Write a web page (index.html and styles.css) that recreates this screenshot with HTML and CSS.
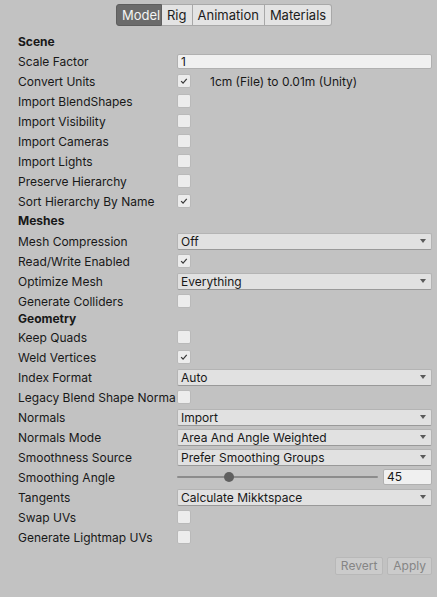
FILE: index.html
```html
<!DOCTYPE html>
<html>
<head>
<meta charset="utf-8">
<link rel="stylesheet" href="styles.css">
</head>
<body>
<div class="inspector">
  <div class="tabs">
    <div class="tab active">Model</div>
    <div class="tab">Rig</div>
    <div class="tab">Animation</div>
    <div class="tab">Materials</div>
  </div>

  <div class="header first">Scene</div>
  <div class="row"><div class="label">Scale Factor</div><div class="ctrl"><div class="field">1</div></div></div>
  <div class="row"><div class="label">Convert Units</div><div class="ctrl"><div class="check on"><svg viewBox="0 0 14 14"><polyline points="3.6,7.2 5.9,9.4 10.2,4.6"/></svg></div><span class="note">1cm (File) to 0.01m (Unity)</span></div></div>
  <div class="row"><div class="label">Import BlendShapes</div><div class="ctrl"><div class="check"></div></div></div>
  <div class="row"><div class="label">Import Visibility</div><div class="ctrl"><div class="check"></div></div></div>
  <div class="row"><div class="label">Import Cameras</div><div class="ctrl"><div class="check"></div></div></div>
  <div class="row"><div class="label">Import Lights</div><div class="ctrl"><div class="check"></div></div></div>
  <div class="row"><div class="label">Preserve Hierarchy</div><div class="ctrl"><div class="check"></div></div></div>
  <div class="row"><div class="label">Sort Hierarchy By Name</div><div class="ctrl"><div class="check on"><svg viewBox="0 0 14 14"><polyline points="3.6,7.2 5.9,9.4 10.2,4.6"/></svg></div></div></div>

  <div class="header mid">Meshes</div>
  <div class="row"><div class="label">Mesh Compression</div><div class="ctrl"><div class="dropdown"><span>Off</span><i class="arrow"></i></div></div></div>
  <div class="row"><div class="label">Read/Write Enabled</div><div class="ctrl"><div class="check on"><svg viewBox="0 0 14 14"><polyline points="3.6,7.2 5.9,9.4 10.2,4.6"/></svg></div></div></div>
  <div class="row"><div class="label">Optimize Mesh</div><div class="ctrl"><div class="dropdown"><span>Everything</span><i class="arrow"></i></div></div></div>
  <div class="row"><div class="label">Generate Colliders</div><div class="ctrl"><div class="check"></div></div></div>

  <div class="header short">Geometry</div>
  <div class="row"><div class="label">Keep Quads</div><div class="ctrl"><div class="check"></div></div></div>
  <div class="row"><div class="label">Weld Vertices</div><div class="ctrl"><div class="check on"><svg viewBox="0 0 14 14"><polyline points="3.6,7.2 5.9,9.4 10.2,4.6"/></svg></div></div></div>
  <div class="row"><div class="label">Index Format</div><div class="ctrl"><div class="dropdown"><span>Auto</span><i class="arrow"></i></div></div></div>
  <div class="row"><div class="label">Legacy Blend Shape Norma</div><div class="ctrl"><div class="check"></div></div></div>
  <div class="row"><div class="label">Normals</div><div class="ctrl"><div class="dropdown"><span>Import</span><i class="arrow"></i></div></div></div>
  <div class="row"><div class="label">Normals Mode</div><div class="ctrl"><div class="dropdown"><span>Area And Angle Weighted</span><i class="arrow"></i></div></div></div>
  <div class="row"><div class="label">Smoothness Source</div><div class="ctrl"><div class="dropdown"><span>Prefer Smoothing Groups</span><i class="arrow"></i></div></div></div>
  <div class="row"><div class="label">Smoothing Angle</div><div class="ctrl"><div class="slider"><div class="track"></div><div class="thumb"></div></div><div class="field num">45</div></div></div>
  <div class="row"><div class="label">Tangents</div><div class="ctrl"><div class="dropdown"><span>Calculate Mikktspace</span><i class="arrow"></i></div></div></div>
  <div class="row"><div class="label">Swap UVs</div><div class="ctrl"><div class="check"></div></div></div>
  <div class="row"><div class="label">Generate Lightmap UVs</div><div class="ctrl"><div class="check"></div></div></div>

  <div class="actions">
    <div class="btn">Revert</div>
    <div class="btn">Apply</div>
  </div>
</div>
</body>
</html>
```

FILE: styles.css
```css
html, body {
  margin: 0;
  padding: 0;
  background: #c2c2c2;
}
.inspector {
  width: 437px;
  height: 597px;
  box-sizing: border-box;
  padding: 4px 5px 0 18px;
  font-family: Inter, "Noto Sans", "Liberation Sans", sans-serif;
  font-size: 12px;
  color: #181818;
}
.tabs {
  display: flex;
  height: 22px;
  margin-left: 98px;
}
.tab {
  box-sizing: border-box;
  height: 22px;
  line-height: 21px;
  padding: 0 5px;
  font-size: 13px;
  background: #e3e3e3;
  border: 1px solid #a8a8a8;
  border-left: none;
  color: #1c1c1c;
}
.tab:first-child {
  border-left: 1px solid #a8a8a8;
  border-radius: 3px 0 0 3px;
}
.tab:last-child {
  border-radius: 0 3px 3px 0;
}
.tab.active {
  background: #6b6b6b;
  border-color: #5e5e5e;
  color: #f4f4f4;
  width: 46px;
}
.header {
  height: 18px;
  line-height: 18px;
  font-weight: 700;
  display: flex;
  align-items: center;
}
.header.first {
  margin-top: 7px;
}
.header.mid {
  height: 20px;
}
.header.short {
  height: 16px;
}
.row {
  display: flex;
  align-items: center;
  height: 20px;
}
.label {
  width: 159px;
  flex: none;
  white-space: nowrap;
}
.ctrl {
  flex: 1;
  display: flex;
  align-items: center;
  min-width: 0;
}
.field {
  flex: 1;
  box-sizing: border-box;
  height: 15px;
  line-height: 13px;
  background: #f0f0f0;
  border: 1px solid #b0b0b0;
  border-radius: 2px;
  padding-left: 3px;
  font-size: 12px;
}
.field.num {
  flex: none;
  width: 49px;
  height: 16px;
  margin-left: 5px;
}
.check {
  width: 14px;
  height: 14px;
  box-sizing: border-box;
  background: #ececec;
  border: 1px solid #b9b9b9;
  border-radius: 2px;
  flex: none;
}
.check svg {
  display: block;
  width: 12px;
  height: 12px;
}
.check svg polyline {
  fill: none;
  stroke: #383838;
  stroke-width: 1.4;
}
.note {
  margin-left: 19px;
}
.dropdown {
  flex: 1;
  box-sizing: border-box;
  height: 17px;
  display: flex;
  align-items: center;
  justify-content: space-between;
  background: #e1e1e1;
  border: 1px solid #b4b4b4;
  border-bottom-color: #999;
  border-radius: 2px;
  padding: 0 5px 0 3px;
}
.arrow {
  width: 0;
  height: 0;
  border-left: 3.5px solid transparent;
  border-right: 3.5px solid transparent;
  border-top: 4px solid #5a5a5a;
}
.slider {
  flex: 1;
  position: relative;
  height: 12px;
  display: flex;
  align-items: center;
}
.track {
  flex: 1;
  height: 2px;
  background: #8c8c8c;
  border-radius: 1px;
}
.thumb {
  position: absolute;
  left: 47px;
  top: 1px;
  width: 10px;
  height: 10px;
  border-radius: 50%;
  background: #5f5f5f;
}
.actions {
  display: flex;
  justify-content: flex-end;
  gap: 4px;
  margin-top: 10px;
}
.btn {
  box-sizing: border-box;
  height: 18px;
  line-height: 16px;
  padding: 0 5px;
  background: #cbcbcb;
  border: 1px solid #b8b8b8;
  border-radius: 2px;
  color: #858585;
}
```
